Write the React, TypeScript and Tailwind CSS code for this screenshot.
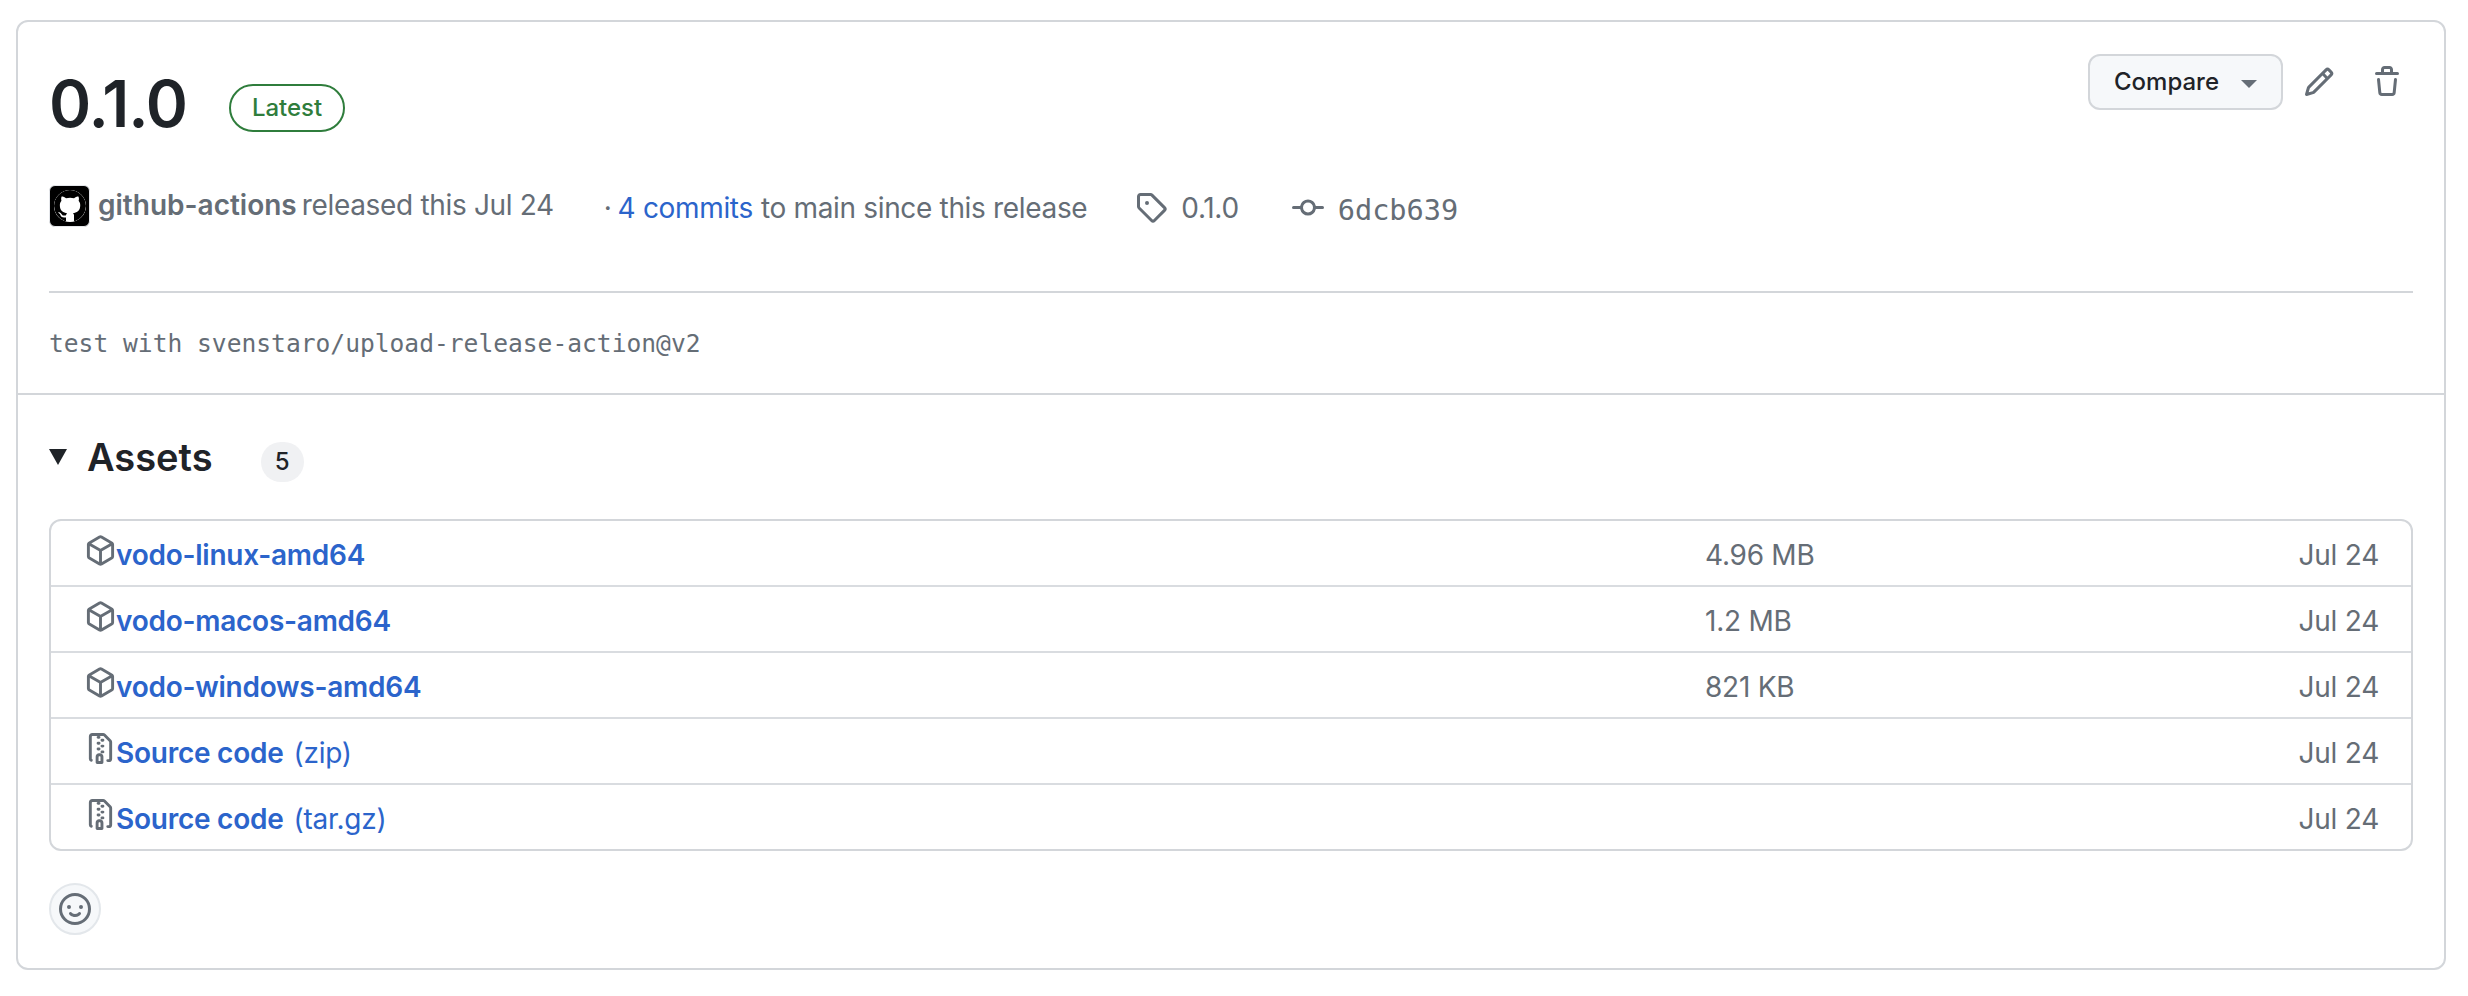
const PACKAGE =
  "m8.878.392 5.25 3.045c.54.314.872.89.872 1.514v6.098a1.75 1.75 0 0 1-.872 1.514l-5.25 3.045a1.75 1.75 0 0 1-1.756 0l-5.25-3.045A1.75 1.75 0 0 1 1 11.049V4.951c0-.624.332-1.201.872-1.514L7.122.392a1.75 1.75 0 0 1 1.756 0ZM7.875 1.69l-4.63 2.685L8 7.133l4.755-2.758-4.63-2.685a.248.248 0 0 0-.25 0ZM2.5 5.677v5.372c0 .09.047.171.125.216l4.625 2.683V8.432Zm6.25 8.271 4.625-2.683a.25.25 0 0 0 .125-.216V5.677L8.75 8.432Z";
const FILE_ZIP =
  "M3.5 1.75v11.5c0 .09.048.173.126.217a.75.75 0 0 1-.752 1.298A1.748 1.748 0 0 1 2 13.25V1.75C2 .784 2.784 0 3.75 0h5.586c.464 0 .909.185 1.237.513l2.914 2.914c.329.328.513.773.513 1.237v8.586A1.75 1.75 0 0 1 12.25 15h-.5a.75.75 0 0 1 0-1.5h.5a.25.25 0 0 0 .25-.25V4.664a.25.25 0 0 0-.073-.177L9.513 1.573a.25.25 0 0 0-.177-.073H7.25a.75.75 0 0 1 0 1.5h-.5a.75.75 0 0 1 0-1.5h-3a.25.25 0 0 0-.25.25Zm3.75 8.75h.5c.966 0 1.75.784 1.75 1.75v3a.75.75 0 0 1-.75.75h-2.5a.75.75 0 0 1-.75-.75v-3c0-.966.784-1.75 1.75-1.75ZM6 5.25a.75.75 0 0 1 .75-.75h.5a.75.75 0 0 1 0 1.5h-.5A.75.75 0 0 1 6 5.25Zm.75 2.25h.5a.75.75 0 0 1 0 1.5h-.5a.75.75 0 0 1 0-1.5ZM8 6.75A.75.75 0 0 1 8.75 6h.5a.75.75 0 0 1 0 1.5h-.5A.75.75 0 0 1 8 6.75ZM8.75 3h.5a.75.75 0 0 1 0 1.5h-.5a.75.75 0 0 1 0-1.5ZM8 9.75A.75.75 0 0 1 8.75 9h.5a.75.75 0 0 1 0 1.5h-.5A.75.75 0 0 1 8 9.75Zm-1 2.5v2.25h1v-2.25a.25.25 0 0 0-.25-.25h-.5a.25.25 0 0 0-.25.25Z";
const TAG =
  "M1 7.775V2.75C1 1.784 1.784 1 2.75 1h5.025c.464 0 .91.184 1.238.513l6.25 6.25a1.75 1.75 0 0 1 0 2.474l-5.026 5.026a1.75 1.75 0 0 1-2.474 0l-6.25-6.25A1.752 1.752 0 0 1 1 7.775Zm1.5 0c0 .066.026.13.073.177l6.25 6.25a.25.25 0 0 0 .354 0l5.025-5.025a.25.25 0 0 0 0-.354l-6.25-6.25a.25.25 0 0 0-.177-.073H2.75a.25.25 0 0 0-.25.25ZM6 5a1 1 0 1 1 0 2 1 1 0 0 1 0-2Z";
const COMMIT =
  "M11.93 8.5a4.002 4.002 0 0 1-7.86 0H.75a.75.75 0 0 1 0-1.5h3.32a4.002 4.002 0 0 1 7.86 0h3.32a.75.75 0 0 1 0 1.5Zm-1.43-.75a2.5 2.5 0 1 0-5 0 2.5 2.5 0 0 0 5 0Z";
const PENCIL =
  "M11.013 1.427a1.75 1.75 0 0 1 2.474 0l1.086 1.086a1.75 1.75 0 0 1 0 2.474l-8.61 8.61c-.21.21-.47.364-.756.445l-3.251.93a.75.75 0 0 1-.927-.928l.929-3.25c.081-.286.235-.547.445-.758l8.61-8.61Zm.176 4.823L9.75 4.81l-6.286 6.287a.253.253 0 0 0-.064.108l-.558 1.953 1.953-.558a.253.253 0 0 0 .108-.064Zm1.238-3.763a.25.25 0 0 0-.354 0L10.811 3.75l1.439 1.44 1.263-1.263a.25.25 0 0 0 0-.354Z";
const TRASH =
  "M11 1.75V3h2.25a.75.75 0 0 1 0 1.5H2.75a.75.75 0 0 1 0-1.5H5V1.75C5 .784 5.784 0 6.75 0h2.5C10.216 0 11 .784 11 1.75ZM4.496 6.675l.66 6.6a.25.25 0 0 0 .249.225h5.19a.25.25 0 0 0 .249-.225l.66-6.6a.75.75 0 0 1 1.492.149l-.66 6.6A1.748 1.748 0 0 1 10.595 15h-5.19a1.75 1.75 0 0 1-1.741-1.575l-.66-6.6a.75.75 0 1 1 1.492-.15ZM6.5 1.75V3h3V1.75a.25.25 0 0 0-.25-.25h-2.5a.25.25 0 0 0-.25.25Z";
const SMILEY =
  "M8 0a8 8 0 1 1 0 16A8 8 0 0 1 8 0ZM1.5 8a6.5 6.5 0 1 0 13 0 6.5 6.5 0 0 0-13 0Zm3.82 1.636a.75.75 0 0 1 1.038.175l.007.009c.103.118.22.222.35.31.264.178.683.37 1.285.37.602 0 1.02-.192 1.285-.371.13-.088.247-.192.35-.31l.007-.008a.75.75 0 0 1 1.222.87l-.022-.015c.02.013.021.015.021.015v.001l-.001.002-.002.003-.005.007-.014.019a2.066 2.066 0 0 1-.184.213c-.16.166-.338.316-.53.445-.63.418-1.37.638-2.127.629-.946 0-1.652-.308-2.126-.63a3.331 3.331 0 0 1-.715-.657l-.014-.02-.005-.006-.002-.003v-.002h-.001l.613-.432-.614.43a.75.75 0 0 1 .183-1.044ZM12 7a1 1 0 1 1-2 0 1 1 0 0 1 2 0ZM5 8a1 1 0 1 1 0-2 1 1 0 0 1 0 2Z";
const GITHUB =
  "M8 0c4.42 0 8 3.58 8 8a8.013 8.013 0 0 1-5.45 7.59c-.4.08-.55-.17-.55-.38 0-.27.01-1.13.01-2.2 0-.75-.25-1.23-.54-1.48 1.78-.2 3.65-.88 3.65-3.95 0-.88-.31-1.59-.82-2.15.08-.2.36-1.02-.08-2.12 0 0-.67-.22-2.2.82-.64-.18-1.32-.27-2-.27-.68 0-1.36.09-2 .27-1.53-1.03-2.2-.82-2.2-.82-.44 1.1-.16 1.92-.08 2.12-.51.56-.82 1.28-.82 2.15 0 3.06 1.86 3.75 3.64 3.95-.23.2-.44.55-.51 1.07-.46.21-1.61.55-2.33-.66-.15-.24-.6-.83-1.23-.82-.67.01-.27.38.01.53.34.19.73.9.82 1.13.16.45.68 1.31 2.69.94 0 .67.01 1.3.01 1.49 0 .21-.15.45-.55.38A7.995 7.995 0 0 1 0 8c0-4.42 3.58-8 8-8Z";

function Octicon({ d, className }: { d: string; className: string }) {
  return (
    <svg viewBox="0 0 16 16" fill="currentColor" className={className}>
      <path d={d} />
    </svg>
  );
}

const assets = [
  { name: "vodo-linux-amd64", size: "4.96 MB" },
  { name: "vodo-macos-amd64", size: "1.2 MB" },
  { name: "vodo-windows-amd64", size: "821 KB" },
  { name: "Source code", ext: "(zip)" },
  { name: "Source code", ext: "(tar.gz)" },
];

export default function App() {
  return (
    <div className="h-[996px] bg-white pt-5 pl-4 pr-[22px] font-['Inter','Liberation_Sans',sans-serif] text-[#1f2328]">
      <div className="h-[950px] rounded-xl border-2 border-[#d3d6da]">
        <div className="h-[373px] border-b-2 border-[#d3d6da] px-[31px]">
          <div className="flex h-[271px] flex-col border-b-2 border-[#d3d6da]">
            <div className="flex items-start justify-between">
              <div className="flex items-start pt-[50px]">
                <h1 className="text-[64px] leading-[64px] font-semibold tracking-[-1px]">0.1.0</h1>
                <span className="mt-3 ml-[42px] flex h-12 w-[116px] items-center justify-center rounded-full border-2 border-[#2f7d3c] text-[24px] font-medium text-[#2f7d3c]">
                  Latest
                </span>
              </div>
              <div className="flex items-center pt-8 pr-[10px]">
                <button className="flex h-14 w-[195px] items-center justify-center gap-[22px] rounded-xl border-2 border-[#d3d6da] bg-[#f6f8fa] text-[24px] font-medium">
                  Compare
                  <span className="mt-1 h-0 w-0 border-x-[8px] border-t-[8px] border-x-transparent border-t-[#656d76]" />
                </button>
                <Octicon d={PENCIL} className="ml-5 h-8 w-8 text-[#656d76]" />
                <Octicon d={TRASH} className="ml-9 h-8 w-8 text-[#656d76]" />
              </div>
            </div>
            <div className="mt-[49px] flex items-start text-[28px] leading-[36px] tracking-[-0.33px] text-[#656d76]">
              <div className="flex h-[42px] w-[41px] items-center justify-center rounded-md border border-[#e5e7eb] bg-black">
                <Octicon d={GITHUB} className="h-[32px] w-[32px] rounded-full bg-white text-black" />
              </div>
              <span className="ml-[8px] mt-[2px] font-semibold tracking-normal">github-actions</span>
              <span className="ml-[5px] mt-[2px]">released this Jul 24</span>
              <span className="ml-[50px] mt-[5px]">·</span>
              <span className="ml-[6px] mt-[5px] text-[#2b64cb]">4 commits</span>
              <span className="ml-2 mt-[5px]">to main since this release</span>
              <Octicon d={TAG} className="ml-[48px] mt-[6px] h-8 w-8" />
              <span className="ml-[14px] mt-[5px]">0.1.0</span>
              <Octicon d={COMMIT} className="ml-[53px] mt-[7px] h-8 w-8" />
              <span className="ml-[14px] mt-[7px] font-['DejaVu_Sans_Mono',monospace] text-[28.6px] tracking-normal">6dcb639</span>
            </div>
          </div>
          <p className="mt-[35px] font-['DejaVu_Sans_Mono',monospace] text-[24.6px] leading-[32px] text-[#656d76]">
            test with svenstaro/upload-release-action@v2
          </p>
        </div>
        <div className="px-[31px]">
          <div className="flex h-[124px] items-center">
            <span className="h-0 w-0 border-x-[9px] border-t-[16px] border-x-transparent border-t-[#1f2328]" />
            <h2 className="ml-5 text-[38px] leading-[48px] font-semibold">Assets</h2>
            <span className="mt-[10px] ml-12 flex h-10 w-[43px] items-center justify-center rounded-full bg-[#f0f1f3] text-[24px] font-medium">
              5
            </span>
          </div>
          <ul className="rounded-xl border-2 border-[#d3d6da]">
            {assets.map((asset) => (
              <li
                key={asset.name + asset.ext}
                className="flex h-[66px] items-center border-b-2 border-[#d9dce0] pt-1 pr-8 pl-[34px] text-[28px] tracking-[-0.25px] last:h-[64px] last:border-b-0"
              >
                <div className="flex flex-1 items-center">
                  <Octicon
                    d={asset.ext ? FILE_ZIP : PACKAGE}
                    className="mb-[10px] h-[31px] w-[31px] text-[#656d76]"
                  />
                  <span className="font-semibold text-[#2b64cb]">{asset.name}</span>
                  {asset.ext && <span className="ml-[10px] text-[#2b64cb]">{asset.ext}</span>}
                </div>
                <span className="w-[561px] text-[#656d76]">{asset.size}</span>
                <span className="w-[113px] text-right text-[#656d76]">Jul 24</span>
              </li>
            ))}
          </ul>
          <button className="mt-8 flex h-[52px] w-[52px] items-center justify-center rounded-full border-2 border-[#e3e7eb] bg-[#f6f8fa]">
            <Octicon d={SMILEY} className="h-8 w-8 text-[#656d76]" />
          </button>
        </div>
      </div>
    </div>
  );
}
